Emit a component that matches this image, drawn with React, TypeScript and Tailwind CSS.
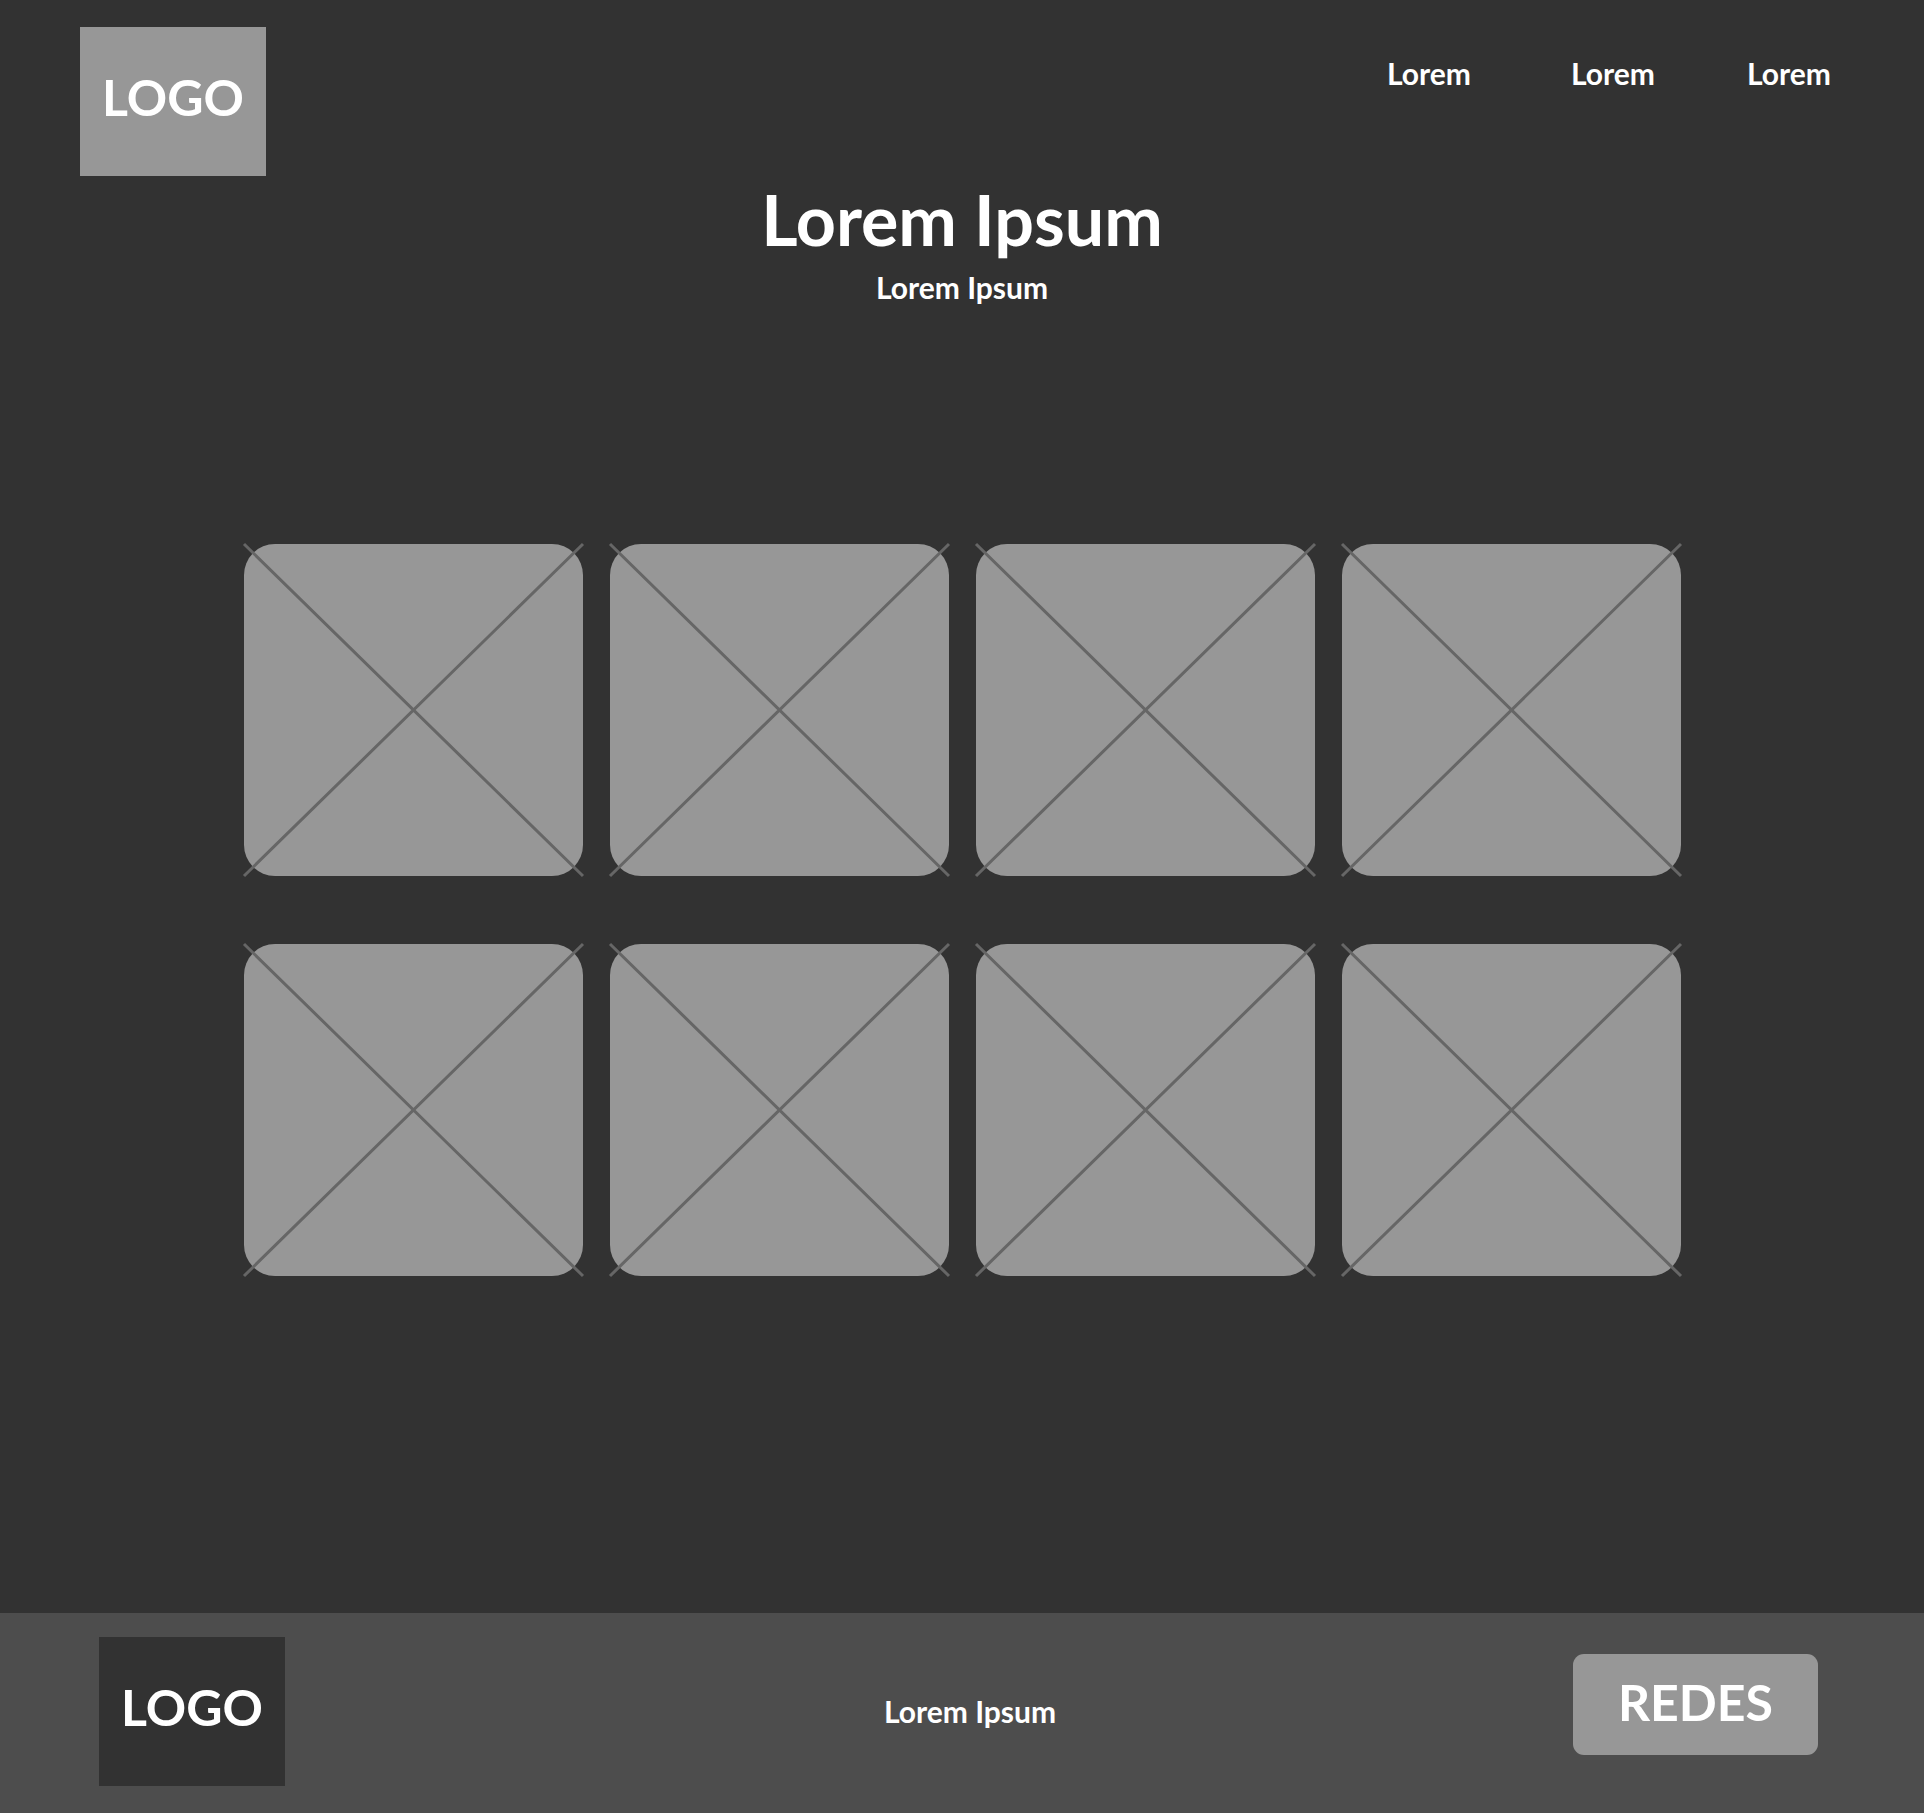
const navItems = ["Lorem", "Lorem", "Lorem"];
const cards = [1, 2, 3, 4, 5, 6, 7, 8];

function Logo({ className }: { className: string }) {
  return (
    <a
      href="#"
      className={`flex h-[149px] w-[186px] shrink-0 justify-center pt-10 text-[50px] leading-[60px] ${className}`}
    >
      LOGO
    </a>
  );
}

function Placeholder() {
  return (
    <div className="h-[332px] rounded-[31px] bg-[#979797]">
      <svg
        className="block h-full w-full overflow-visible"
        viewBox="0 0 339 332"
        preserveAspectRatio="none"
        stroke="#666666"
        strokeWidth="3"
        aria-hidden="true"
      >
        <path d="M0 0L339 332M339 0L0 332" />
      </svg>
    </div>
  );
}

export default function App() {
  return (
    <div className="flex min-h-screen flex-col bg-[#323232] font-['Lato',sans-serif] font-bold text-white">
      <header className="flex items-start justify-between pt-[27px] pr-[93px] pl-20">
        <Logo className="bg-[#979797]" />
        <nav className="grid grid-cols-[184px_176px_auto] pt-[26px] text-[30px] leading-[40px]">
          {navItems.map((item, i) => (
            <a key={i} href="#">
              {item}
            </a>
          ))}
        </nav>
      </header>

      <main className="flex grow flex-col items-center px-6">
        <h1 className="mt-[3px] text-[70px] leading-[80px]">Lorem Ipsum</h1>
        <p className="mt-2 text-[30px] leading-[40px]">Lorem Ipsum</p>
        <section className="mt-[237px] mb-24 grid w-full max-w-[1437px] grid-cols-4 gap-x-[27px] gap-y-[68px]">
          {cards.map((card) => (
            <Placeholder key={card} />
          ))}
        </section>
      </main>

      <footer className="grid grid-cols-[1fr_auto_1fr] items-start bg-[#4d4d4d] pt-6 pr-[83px] pb-[27px] pl-[99px]">
        <Logo className="bg-[#323232]" />
        <p className="mt-[54px] text-[30px] leading-[40px]">Lorem Ipsum</p>
        <button
          type="button"
          className="mt-[17px] mr-[23px] h-[101px] w-[245px] justify-self-end rounded-[11px] bg-[#979797] pb-1.5 text-[50px] leading-[60px]"
        >
          REDES
        </button>
      </footer>
    </div>
  );
}
